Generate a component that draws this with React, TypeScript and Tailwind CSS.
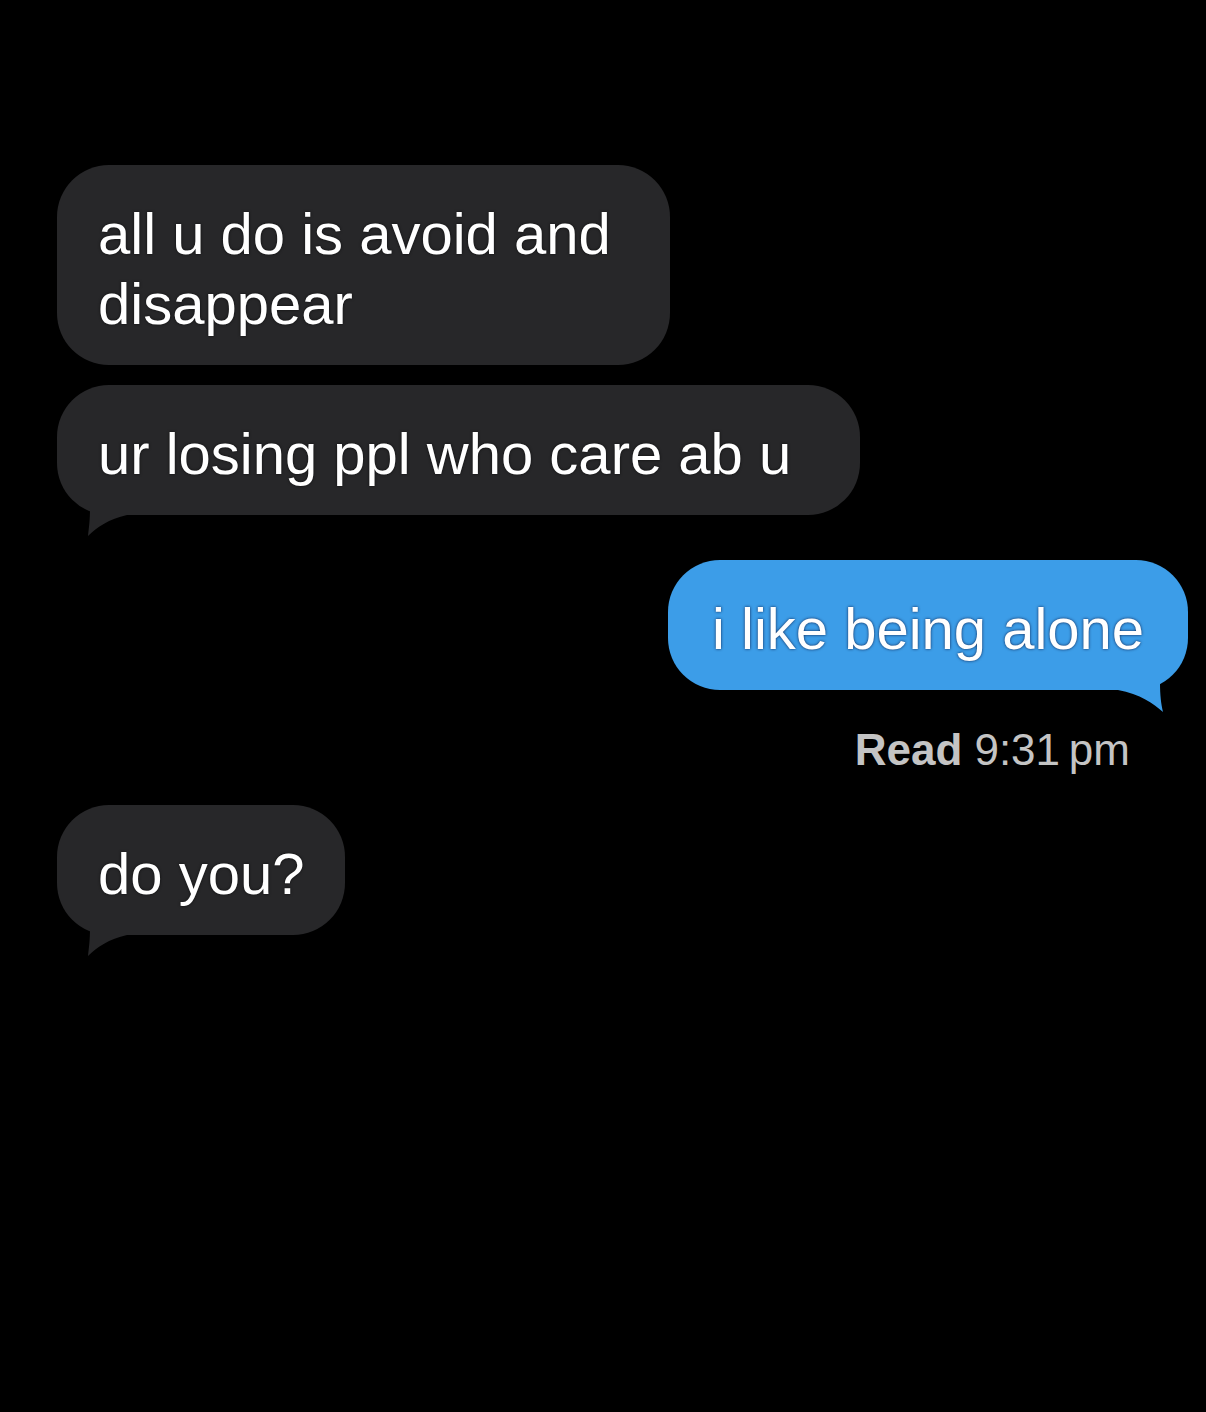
import React from "react";

function GrayTail() {
  return (
    <svg
      className="absolute left-0 bottom-[-30px]"
      width="100"
      height="70"
      viewBox="0 0 100 70"
    >
      <path
        d="M33 20 L33 33 C33 45 32 52 31 61 C40 52 52 44 70 40 L70 20 Z"
        fill="#272729"
      />
    </svg>
  );
}

function BlueTail() {
  return (
    <svg
      className="absolute right-0 bottom-[-30px]"
      width="100"
      height="70"
      viewBox="0 0 100 70"
    >
      <path
        d="M72 20 L72 33 C72 45 73 54 75 62 C66 54 52 44 30 40 L30 20 Z"
        fill="#3c9de8"
      />
    </svg>
  );
}

const textCls =
  "text-white text-[58px] leading-[70px] [text-shadow:0_0_3px_rgba(0,0,0,0.7)]";

export default function App() {
  return (
    <div
      className="w-full h-[1412px] bg-black overflow-hidden flex flex-col"
      style={{ fontFamily: '"Liberation Sans", Arial, sans-serif' }}
    >
      <div className="pt-[165px] pl-[57px] flex flex-col">
        <div className="w-[613px] bg-[#272729] rounded-[52px] pl-[41px] pt-[34px] pb-[26px]">
          <div className={textCls}>
            all u do is avoid and
            <br />
            disappear
          </div>
        </div>
        <div className="relative mt-[20px] w-[803px] bg-[#272729] rounded-[52px] pl-[41px] pt-[34px] pb-[26px]">
          <GrayTail />
          <div className={`relative ${textCls}`}>ur losing ppl who care ab u</div>
        </div>
      </div>
      <div className="mt-[45px] flex justify-end pr-[18px]">
        <div className="relative w-[520px] bg-[#3c9de8] rounded-[52px] pl-[44px] pt-[34px] pb-[26px]">
          <BlueTail />
          <div className={`relative ${textCls} [text-shadow:0_0_3px_rgba(0,0,40,0.8)]`}>
            i like being alone
          </div>
        </div>
      </div>
      <div className="mt-[32px] flex justify-end pr-[76px] text-[44px] leading-[56px] text-[#c4c4c4]">
        <span className="font-bold">Read</span>
        <span className="ml-[12px]">9:31&thinsp;pm</span>
      </div>
      <div className="mt-[27px] pl-[57px]">
        <div className="relative w-[288px] bg-[#272729] rounded-[52px] pl-[41px] pt-[34px] pb-[26px]">
          <GrayTail />
          <div className={`relative ${textCls}`}>do you?</div>
        </div>
      </div>
    </div>
  );
}
